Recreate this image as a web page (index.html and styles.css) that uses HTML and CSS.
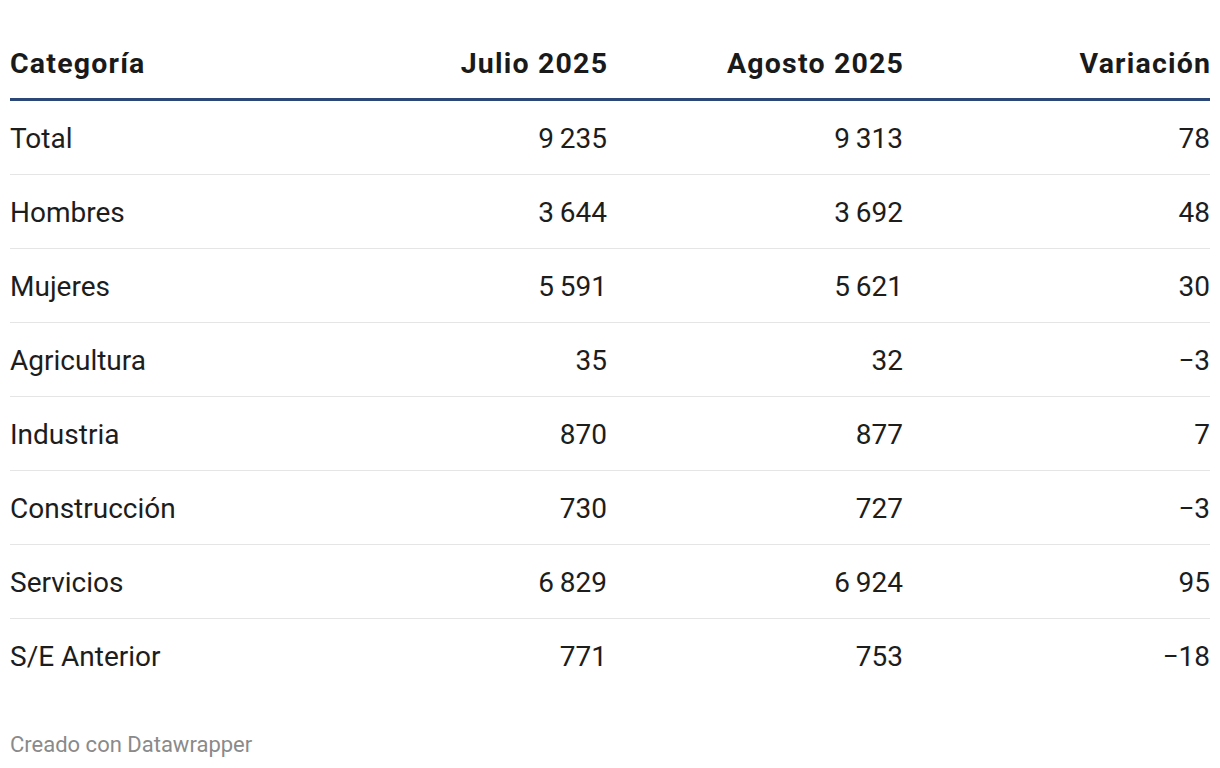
FILE: index.html
```html
<!DOCTYPE html>
<html lang="es">
<head>
<meta charset="utf-8">
<title>Tabla</title>
<link rel="stylesheet" href="styles.css">
</head>
<body>
<div class="chart">
  <div class="row head">
    <div class="cell left">Categoría</div>
    <div class="cell">Julio 2025</div>
    <div class="cell">Agosto 2025</div>
    <div class="cell">Variación</div>
  </div>
  <div class="row"><div class="cell left">Total</div><div class="cell">9&#8201;235</div><div class="cell">9&#8201;313</div><div class="cell">78</div></div>
  <div class="row"><div class="cell left">Hombres</div><div class="cell">3&#8201;644</div><div class="cell">3&#8201;692</div><div class="cell">48</div></div>
  <div class="row"><div class="cell left">Mujeres</div><div class="cell">5&#8201;591</div><div class="cell">5&#8201;621</div><div class="cell">30</div></div>
  <div class="row"><div class="cell left">Agricultura</div><div class="cell">35</div><div class="cell">32</div><div class="cell">&minus;3</div></div>
  <div class="row"><div class="cell left">Industria</div><div class="cell">870</div><div class="cell">877</div><div class="cell">7</div></div>
  <div class="row"><div class="cell left">Construcción</div><div class="cell">730</div><div class="cell">727</div><div class="cell">&minus;3</div></div>
  <div class="row"><div class="cell left">Servicios</div><div class="cell">6&#8201;829</div><div class="cell">6&#8201;924</div><div class="cell">95</div></div>
  <div class="row last"><div class="cell left">S/E Anterior</div><div class="cell">771</div><div class="cell">753</div><div class="cell">&minus;18</div></div>
  <div class="footer">Creado con Datawrapper</div>
</div>
</body>
</html>
```

FILE: styles.css
```css
html, body {
  margin: 0;
  padding: 0;
  background: #ffffff;
}
body {
  font-family: Roboto, "Liberation Sans", Arial, sans-serif;
  color: #1d1d1d;
}
.chart {
  width: 1200px;
  margin: 0 10px;
  padding-top: 47px;
}
.row {
  display: grid;
  grid-template-columns: 297px 300px 296px 307px;
  font-size: 28px;
  line-height: 34px;
  padding: 21px 0 18px;
  border-bottom: 1px solid #e5e5e5;
}
.row.head {
  font-weight: 700;
  font-size: 28.5px;
  letter-spacing: 1.2px;
  padding: 0 0 17px;
  border-bottom: 3px solid #2b4778;
  color: #1a1a1a;
}
.row.head .cell {
  margin-right: -1.2px;
}
.row.last {
  border-bottom: none;
}
.cell {
  text-align: right;
  white-space: nowrap;
}
.cell.left {
  text-align: left;
}
.footer {
  margin-top: 40px;
  font-size: 22px;
  line-height: 26px;
  color: #8a8a8a;
}
```
